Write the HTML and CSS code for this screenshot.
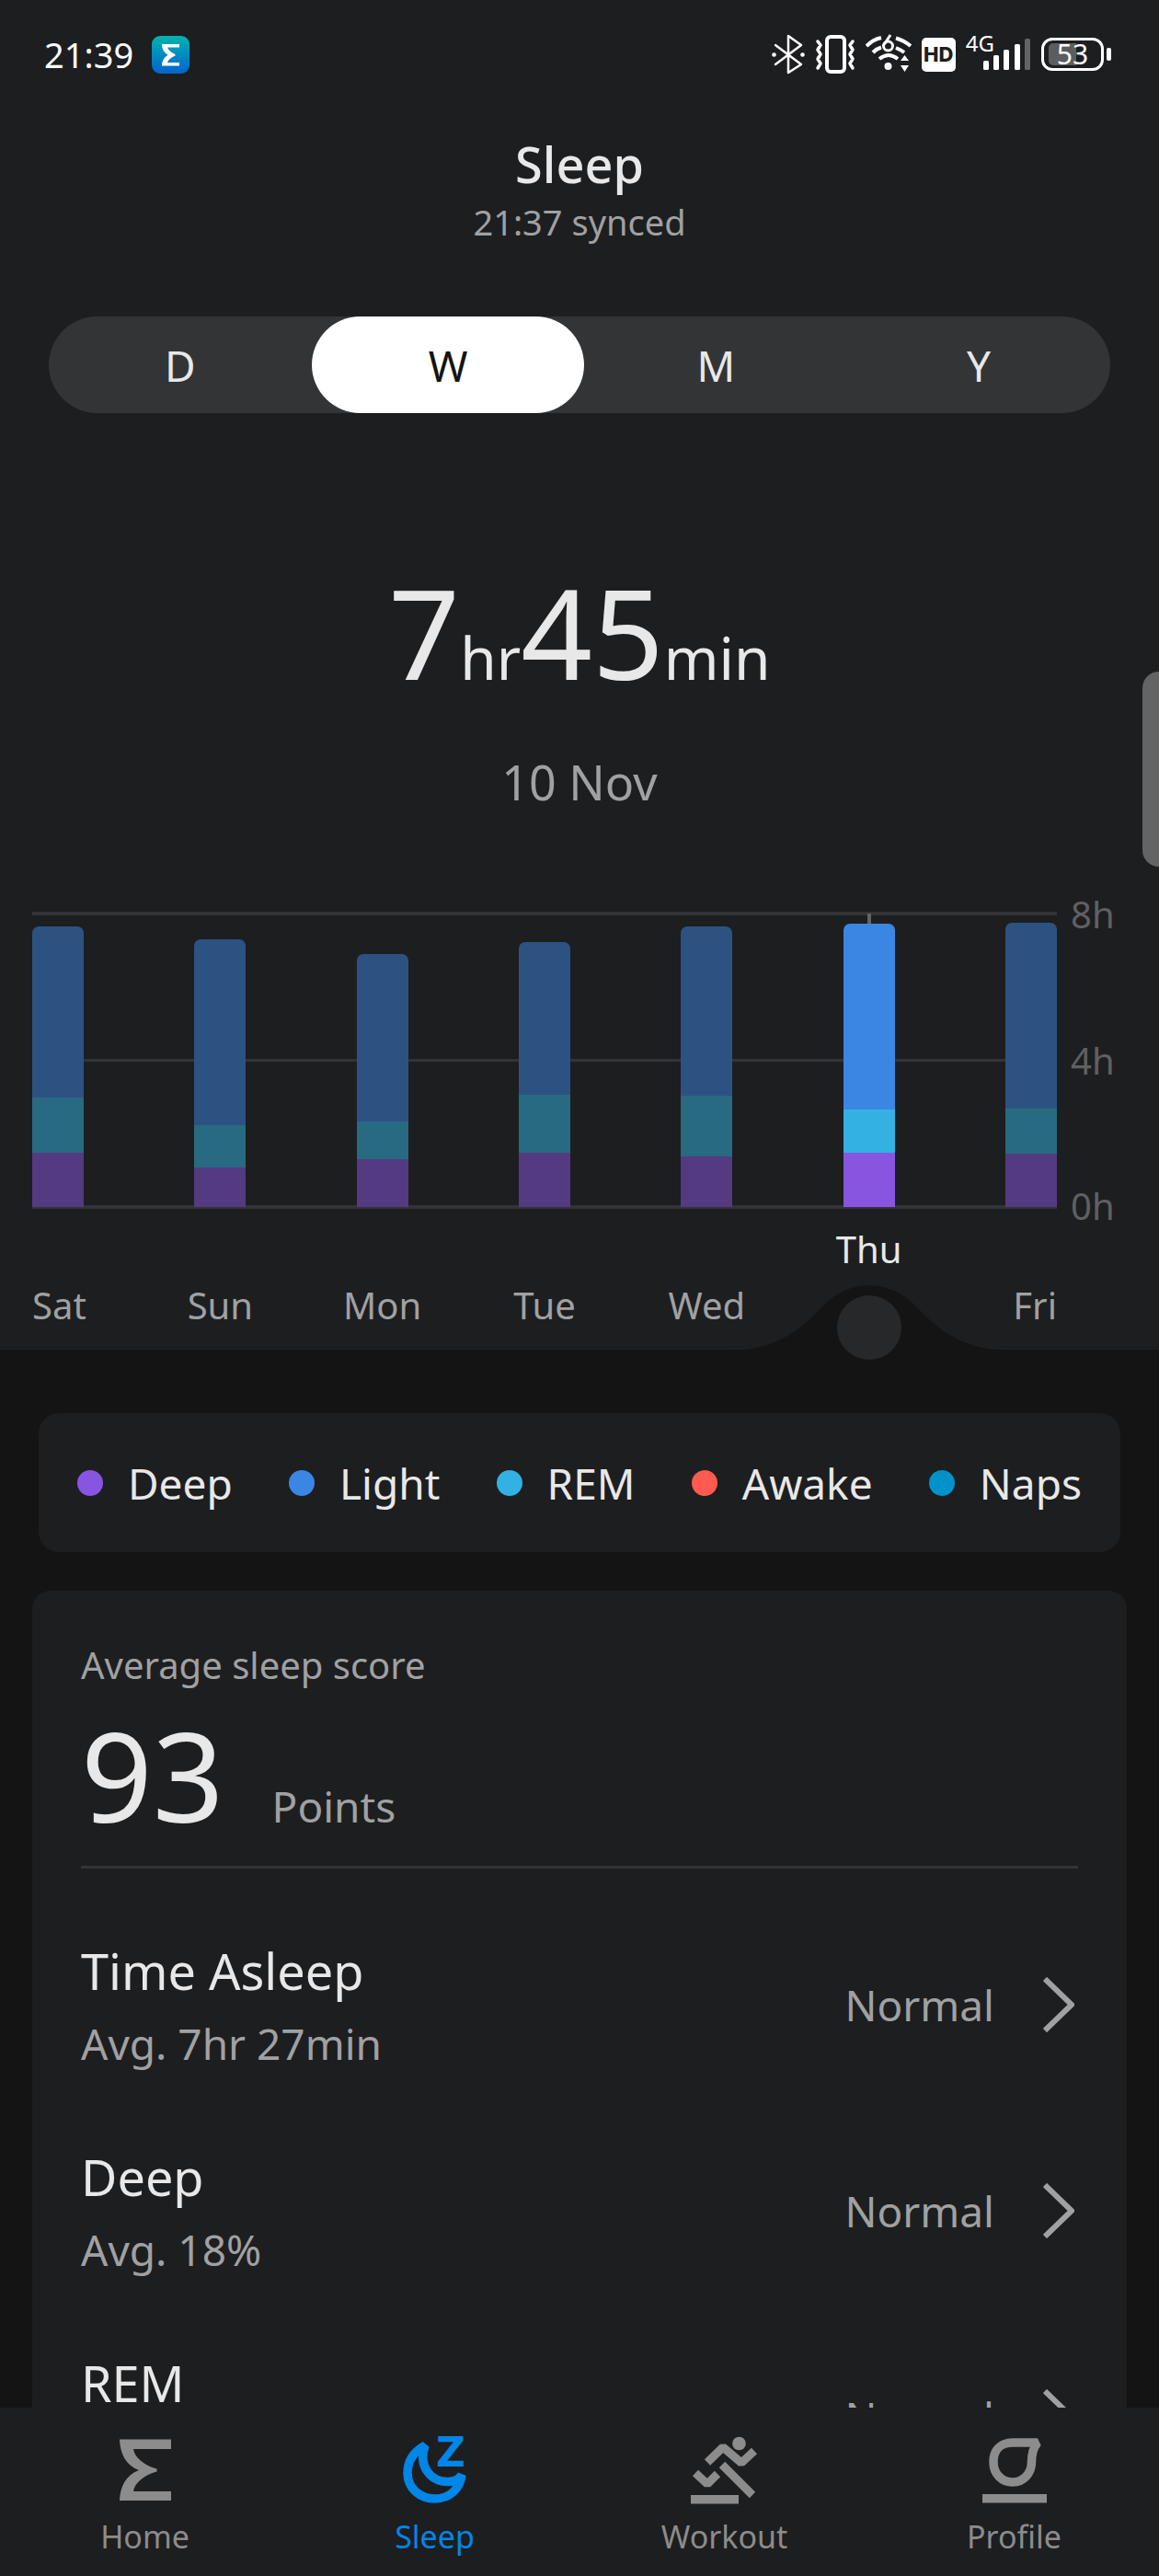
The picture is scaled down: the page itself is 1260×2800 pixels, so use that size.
FILE: index.html
```
<!DOCTYPE html>
<html lang="en">
<head>
<meta charset="utf-8">
<meta name="viewport" content="width=device-width, initial-scale=1">
<title>Sleep</title>
<link rel="stylesheet" href="styles.css">
</head>
<body>

<main class="screen">
<section class="summary">

<!-- status bar -->
<div class="status">
<span class="clock">21:39</span>
<svg class="app-badge" width="41" height="41" viewBox="0 0 41 41">
<defs><linearGradient id="badge" x1="0" y1="0" x2="0" y2="1"><stop offset="0" stop-color="#00b3ae"/><stop offset="1" stop-color="#0363cf"/></linearGradient></defs>
<rect width="41" height="41" rx="9" fill="url(#badge)"/>
<path fill="#fff" d="M11 9H30V12.500H17C18 15.500 21.500 18.500 25.500 20V21.500C21.500 23 18 26 17 29H30V32.500H11C11 27.500 13.500 22.500 18 20.700C13.500 19 11 14 11 9Z"/>
</svg>
<div class="status-icons">
<svg width="36" height="44" viewBox="0 0 36 44" fill="none" stroke="#fff" stroke-width="2.500" stroke-linejoin="round" stroke-linecap="round">
<path d="M4 12L32 33L18 42V2L32 12L4 33"/>
<circle cx="2.500" cy="22.500" r="2.300" fill="#fff" stroke="none"/><circle cx="33.500" cy="22.500" r="2.300" fill="#fff" stroke="none"/>
</svg>
<svg width="44" height="44" viewBox="0 0 44 44" fill="none" stroke="#fff" stroke-width="3.500" stroke-linejoin="round" stroke-linecap="round">
<rect x="13" y="3" width="19" height="38" rx="4" stroke-width="4"/>
<path d="M3 8L6 12L3 17L6 22L3 27L6 32L3 37M41 8L38 12L41 17L38 22L41 27L38 32L41 37"/>
</svg>
<svg width="50" height="44" viewBox="0 0 50 44" fill="none" stroke="#fff" stroke-width="4" stroke-linecap="butt">
<path d="M1 13Q8 6 17 4M33 4.500Q42 7 49 13M8 20Q12 16 17 14.500M33 15Q38 17 42 20M15 27Q25 19 35 27"/>
<circle cx="24.500" cy="13" r="5" stroke-width="3"/><path d="M20.500 11L27 1" stroke-width="3"/>
<circle cx="24.500" cy="35" r="4" fill="#fff" stroke="none"/>
<path fill="#fff" stroke="none" d="M38 29L42.500 23L47 29ZM38 34L42.500 41L47 34Z"/>
</svg>
<span class="hd">HD</span>
<span class="network">
<span class="network-type">4G</span>
<svg width="52" height="44" viewBox="0 0 52 44" fill="#fff">
<rect x="0" y="29" width="6" height="10" rx="1.500"/><rect x="11" y="23" width="6" height="16" rx="1.500"/><rect x="22" y="17" width="6" height="22" rx="1.500"/><rect x="34" y="11" width="6" height="28" rx="1.500"/><rect x="45" y="5" width="6" height="34" rx="1.500" fill="#636466"/>
</svg>
</span>
<span class="battery"><span class="battery-level">53</span></span>
</div>
</div>

<header class="title">
<h1>Sleep</h1>
<p>21:37 synced</p>
</header>

<div class="periods">
<button type="button">D</button>
<button type="button" class="active">W</button>
<button type="button">M</button>
<button type="button">Y</button>
</div>

<div class="duration">7<small>hr</small>45<small>min</small></div>
<p class="date">10 Nov</p>

<div class="chart">
<div class="plot">
<div class="bar"><i class="light" style="height:58.3%"></i><i class="rem" style="height:18.7%"></i><i class="deep" style="height:18.6%"></i></div>
<div class="bar"><i class="light" style="height:63.2%"></i><i class="rem" style="height:14.3%"></i><i class="deep" style="height:13.6%"></i></div>
<div class="bar"><i class="light" style="height:57%"></i><i class="rem" style="height:12.9%"></i><i class="deep" style="height:16.3%"></i></div>
<div class="bar"><i class="light" style="height:52%"></i><i class="rem" style="height:19.9%"></i><i class="deep" style="height:18.5%"></i></div>
<div class="bar"><i class="light" style="height:57.7%"></i><i class="rem" style="height:20.4%"></i><i class="deep" style="height:17.4%"></i></div>
<div class="bar selected"><i class="light" style="height:63.2%"></i><i class="rem" style="height:14.7%"></i><i class="deep" style="height:18.6%"></i></div>
<div class="bar"><i class="light" style="height:63.2%"></i><i class="rem" style="height:15.4%"></i><i class="deep" style="height:18.3%"></i></div>
</div>
<div class="hours"><span>8h</span><span>4h</span><span>0h</span></div>
<div class="days">
<span>Sat</span><span>Sun</span><span>Mon</span><span>Tue</span><span>Wed</span>
<span class="selected">Thu
<svg class="notch" width="300" height="82" viewBox="0 0 300 82">
<path fill="#141414" d="M0 71C52 70 78 45 98 24C128 -8 172 -8 202 24C222 45 248 70 300 71Z"/>
<circle cx="150" cy="46" r="35" fill="#27282a"/>
</svg>
</span>
<span>Fri</span>
</div>
</div>
</section>

<ul class="legend">
<li><i class="deep"></i>Deep</li>
<li><i class="light"></i>Light</li>
<li><i class="rem"></i>REM</li>
<li><i class="awake"></i>Awake</li>
<li><i class="naps"></i>Naps</li>
</ul>

<section class="card">
<p class="card-label">Average sleep score</p>
<div class="score"><b>93</b><span>Points</span></div>
<a class="row" href="#asleep">
<span class="row-text"><strong>Time Asleep</strong><span>Avg. 7hr 27min</span></span>
<span class="row-state">Normal</span>
<svg class="chevron" width="34" height="60" viewBox="0 0 34 60"><path d="M2 2L31 30L2 58"/></svg>
</a>
<a class="row" href="#deep">
<span class="row-text"><strong>Deep</strong><span>Avg. 18%</span></span>
<span class="row-state">Normal</span>
<svg class="chevron" width="34" height="60" viewBox="0 0 34 60"><path d="M2 2L31 30L2 58"/></svg>
</a>
<a class="row" href="#rem">
<span class="row-text"><strong>REM</strong></span>
<span class="row-state">Normal</span>
<svg class="chevron" width="34" height="60" viewBox="0 0 34 60"><path d="M2 2L31 30L2 58"/></svg>
</a>
</section>
</main>

<div class="edge-handle"></div>

<nav class="tabs">
<a href="#home">
<svg width="72" height="72" viewBox="0 0 72 72"><path fill="currentColor" d="M8 2.500H64V13H23C24 22 35 31 48.500 34.500V37.500C35 41 24 50 23 59H64V69H8C8.500 54 15 41 29 36C15 31 8.500 18 8 2.500Z"/></svg>
Home</a>
<a href="#sleep" class="current">
<svg width="72" height="72" viewBox="0 0 72 72"><path fill="none" stroke="currentColor" stroke-width="9.500" stroke-linejoin="bevel" d="M25 9C11 17 6 28 6 39C6 56 20 67 36 67C52 67 63 56 65 41C62 46 57 48.500 50 48.500C32 48.500 17 33 25 9Z"/><text class="zed" x="37" y="32">Z</text></svg>
Sleep</a>
<a href="#workout">
<svg width="72" height="72" viewBox="0 0 72 72"><g fill="none" stroke="currentColor" stroke-width="9" stroke-linejoin="bevel"><path d="M17 27.500L34 11L54 28L68 15M4 39L17 51L28 40M33 30L66 63"/></g><circle cx="51.500" cy="7" r="7.300" fill="currentColor"/><path fill="currentColor" d="M-1 63H51V72.500H-1Z"/></svg>
Workout</a>
<a href="#profile">
<svg width="72" height="72" viewBox="0 0 72 72"><path fill="none" stroke="currentColor" stroke-width="9.500" stroke-linejoin="bevel" d="M61 6H34C20 6 13 15 13 27C13 40 22 49 34 49C46 49 54.500 39 54.500 27C54.500 18 56 12 61 6Z"/><path fill="currentColor" d="M1 62H71V71.500H1Z"/></svg>
Profile</a>
</nav>

</body>
</html>
```
FILE: styles.css
```
* {
box-sizing: border-box;
}

body {
margin: 0;
height: 100vh;
display: flex;
flex-direction: column;
background: #141414;
color: #e8e8e8;
font-family: "Noto Sans", "Open Sans", sans-serif;
font-weight: 400;
font-size: 40px;
line-height: 48px;
overflow: hidden;
}

h1, p, ul {
margin: 0;
padding: 0;
}

a {
color: inherit;
text-decoration: none;
}

.screen {
flex: 1;
min-height: 0;
overflow: hidden;
}

.summary {
background: #1d1e20;
padding-bottom: 24px;
}

/* status bar */
.status {
display: flex;
align-items: center;
height: 118px;
padding: 0 52px 0 48px;
color: #fff;
}

.clock {
margin-right: 20px;
font-size: 38px;
}

.status-icons {
display: flex;
align-items: center;
gap: 11px;
margin-left: auto;
}

.hd {
width: 37px;
height: 37px;
border-radius: 5px;
background: #fff;
color: #1d1e20;
font: 800 22px/37px "Inter", sans-serif;
text-align: center;
}

.network {
display: flex;
}

.network-type {
font-size: 24px;
line-height: 20px;
margin-right: -12px;
}

.battery {
position: relative;
width: 68px;
height: 36px;
margin-right: 8px;
border: 3px solid #fff;
border-radius: 12px;
}

.battery::after {
content: "";
position: absolute;
right: -11px;
top: 8px;
width: 5px;
height: 14px;
border-radius: 2px;
background: #fff;
}

.battery-level {
display: block;
height: 24px;
margin: 3px 5px;
border-radius: 5px;
background: linear-gradient(90deg, #5c5d5f 58%, transparent 58%);
font-size: 30px;
line-height: 24px;
text-align: center;
}

/* title */
.title {
padding-top: 28px;
text-align: center;
}

.title h1 {
font-size: 54px;
font-weight: 500;
line-height: 64px;
}

.title p {
margin-top: 7px;
color: #a0a1a2;
font-size: 38px;
}

/* day / week / month / year */
.periods {
display: flex;
margin: 79px 53px 0;
height: 105px;
border-radius: 53px;
background: #333436;
}

.periods button {
flex: 1;
border: 0;
border-radius: 53px;
background: none;
color: #e8e8e8;
font: inherit;
font-size: 46px;
}

.periods .active {
flex-grow: 1.04;
background: #fff;
color: #141414;
}

.duration {
margin-top: 168px;
font-size: 136px;
line-height: 140px;
text-align: center;
}

.duration small {
font-size: 64px;
line-height: 64px;
}

.date {
margin-top: 61px;
font-size: 52px;
line-height: 64px;
text-align: center;
color: #a0a1a2;
}

/* chart */
.chart {
display: grid;
grid-template-columns: 1fr 60px;
column-gap: 15px;
padding: 0 36px 0 35px;
margin-top: 111px;
}

.plot {
position: relative;
display: flex;
justify-content: space-between;
height: 319px;
}

.plot::before {
content: "";
position: absolute;
inset: -2px 0;
border: solid #333436;
border-width: 4px 0;
background: linear-gradient(#333436, #333436) center / 100% 3px no-repeat;
}

.bar {
position: relative;
display: flex;
flex-direction: column;
justify-content: flex-end;
width: 56px;
}

.bar .light {
border-radius: 7px 7px 0 0;
}

.bar.selected::before {
content: "";
width: 4px;
flex: 1;
margin: 0 auto;
background: #636466;
}

.bar .light { background: #2c5282; }
.bar .rem { background: #286a82; }
.bar .deep { background: #543a80; }

.bar.selected .light, .legend .light { background: #3b86e3; }
.bar.selected .rem, .legend .rem { background: #33b1e3; }
.bar.selected .deep, .legend .deep { background: #8855e1; }

.hours {
display: flex;
flex-direction: column;
justify-content: space-between;
margin: -23px 0;
color: #5f6062;
}

.days {
display: flex;
justify-content: space-between;
align-items: flex-end;
height: 109px;
margin-top: 22px;
color: #a0a1a2;
}

.days span {
display: flex;
justify-content: center;
width: 56px;
}

.days span:first-child {
justify-content: flex-start;
}

.days span:last-child {
justify-content: flex-end;
}

.days .selected {
position: relative;
align-self: flex-start;
color: #e8e8e8;
}

.notch {
position: absolute;
top: 63px;
left: -122px;
}

/* legend */
.legend {
display: flex;
align-items: center;
justify-content: space-between;
height: 151px;
margin: 69px 42px 42px;
padding: 0 42px;
border-radius: 22px;
background: #1d1e20;
font-size: 46px;
list-style: none;
}

.legend li {
display: flex;
align-items: center;
gap: 27px;
}

.legend i {
width: 28px;
height: 28px;
border-radius: 50%;
}

.legend .awake { background: #ff5a50; }
.legend .naps { background: #0092c9; }

/* score card */
.card {
margin: 0 35px;
padding: 57px 53px 0;
border-radius: 20px;
background: #1d1e20;
}

.card-label {
color: #a0a1a2;
}

.score {
display: flex;
align-items: baseline;
gap: 52px;
margin-top: 25px;
margin-bottom: 36px;
padding-bottom: 29px;
border-bottom: 3px solid #333436;
color: #a0a1a2;
font-size: 46px;
line-height: 56px;
}

.score b {
color: #e8e8e8;
font-size: 136px;
font-weight: 400;
line-height: 140px;
}

.row {
display: flex;
align-items: center;
height: 224px;
color: #a0a1a2;
font-size: 46px;
line-height: 56px;
}

.row-text {
display: flex;
flex-direction: column;
gap: 19px;
min-height: 139px;
margin-right: auto;
}

.row strong {
color: #e8e8e8;
font-size: 54px;
font-weight: 400;
line-height: 64px;
}

.chevron {
margin: 0 4px 0 53px;
fill: none;
stroke: #a0a1a2;
stroke-width: 6;
}

/* side panel handle */
.edge-handle {
position: absolute;
top: 730px;
right: 0;
width: 18px;
height: 212px;
border-radius: 30px 0 0 30px;
background: #636466;
}

/* bottom tabs */
.tabs {
display: flex;
padding: 32px 0 19px;
background: #1d1e20;
color: #8c8c8c;
font-size: 34px;
}

.tabs a {
flex: 1;
display: flex;
flex-direction: column;
align-items: center;
gap: 12px;
}

.tabs svg {
overflow: visible;
}

.tabs .current {
color: #0086e6;
}

.zed {
fill: currentColor;
font: 700 44px "DejaVu Sans", sans-serif;
}
```
